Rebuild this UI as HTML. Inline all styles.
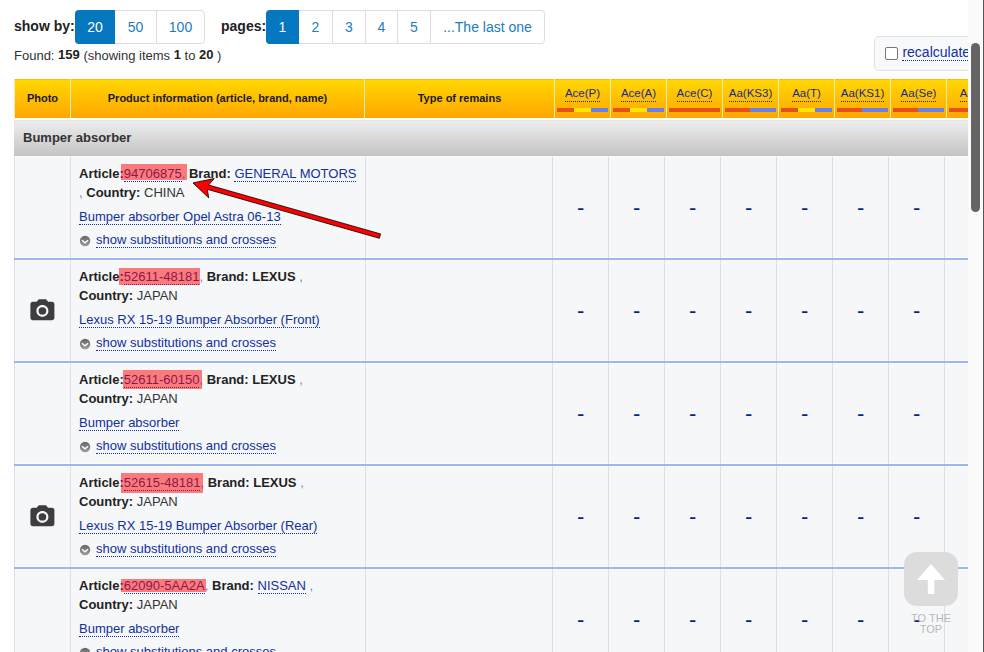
<!DOCTYPE html>
<html lang="en">
<head>
<meta charset="utf-8">
<title>Search results</title>
<style>
*{box-sizing:border-box}
html,body{margin:0;padding:0}
body{width:984px;height:652px;overflow:hidden;background:#fff;font-family:"Liberation Sans",sans-serif;font-size:13px;color:#333;position:relative}
#view{position:absolute;left:0;top:0;width:968px;height:652px;overflow:hidden;background:#fff}
#sb{position:absolute;left:968px;top:0;width:15px;height:652px;background:#fafafa}
#sb i{position:absolute;left:3px;top:43px;width:9px;height:169px;border-radius:5px;background:#646464}
#edge{position:absolute;left:983px;top:0;width:1px;height:652px;background:#555}
.lbl{position:absolute;font-weight:bold;font-size:14px;color:#222;top:16px;line-height:20px;white-space:nowrap}
.pg{position:absolute;top:10px;height:34px;display:flex;border:1px solid #ddd;border-radius:4px;background:#fff}
.pg span{display:block;height:32px;line-height:32px;padding:0;text-align:center;color:#1b7cc0;font-size:14px;border-left:1px solid #ddd;white-space:nowrap}
.pg span.on{background:#0477bf;color:#fff;margin:-1px 0 -1px -1px;height:34px;line-height:34px;border-left:0;border-radius:4px 0 0 4px}
.pg span.on+span{border-left:0}
#found{position:absolute;left:14px;top:47px;line-height:18px;font-size:13px;color:#333;white-space:nowrap}
#found b{color:#222;position:relative;top:-1px}
#recalc{position:absolute;left:874px;top:36px;width:120px;height:34.6px;border:1px solid #e1e1e5;border-radius:5px;background:#f8f9fb}
#recalc i{position:absolute;left:10px;top:10px;width:13px;height:13px;border:1px solid #767676;border-radius:2px;background:#fff}
#recalc a{position:absolute;left:27.4px;top:6.5px;font-size:14px;line-height:16px;color:#10309f;border-bottom:1px dotted #10309f;white-space:nowrap}
#hd{position:absolute;left:14px;top:78.6px;width:1100px;height:39.2px;background:linear-gradient(#ffd800,#ffa600);box-shadow:inset 0 1px 0 #f9bc00}
#hd .h{position:absolute;top:0;height:100%;border-left:1px solid #fce9b0;font-size:11px;font-weight:bold;color:#1a1a1a;text-align:center;line-height:39px;white-space:nowrap}
#hd .c{font-weight:normal;font-size:11.5px;line-height:13px;padding-top:8px}
#hd .c a{color:#1a2a8c;border-bottom:1px dotted #1a2a8c;display:inline-block;line-height:13px;padding-bottom:1px}
.bar{position:absolute;left:2px;width:51px;top:29.4px;height:4px;display:flex}
.bar b{display:block;flex:1;height:4px}
.bar.two .r{flex:none;width:25px}
.r{background:#e8501a}.y{background:#ffe600}.b{background:#6a7fe8}
#grp{position:absolute;left:14px;top:119.5px;width:1100px;height:36.5px;box-shadow:0 1px 0 #f6f7f9;background:linear-gradient(#ededed,#c4c4c4);border-top:1px solid #e4e4e4;font-weight:bold;font-size:13px;color:#333;padding-left:9px;line-height:33px}
.row{position:absolute;left:14px;width:1100px;height:103px;background:#f6f7f9;border-bottom:2px solid #9db5f0;box-shadow:inset 0 1px 0 #fcfcfd,inset 0 -1px 0 #fcfcfd}
.row .v{position:absolute;top:0;bottom:0;width:1px;background:#dedfe3}
.row .d{position:absolute;top:40px;font-size:22px;line-height:22px;color:#0a1f8c}
.ln{position:absolute;left:65px;white-space:nowrap;line-height:19px;font-size:13px;color:#333}
.ln b{color:#222}
.hl{position:absolute;background:rgba(255,0,0,.5);z-index:3}
.art{color:#c2264a;border-bottom:1px dotted #c2264a}
.lk{color:#10309f;border-bottom:1px dotted #10309f}
.cm{color:#7486c6}
.ic{position:absolute;left:65px;top:78px;width:12px;height:12px}
.cam{position:absolute;left:13.7px;top:36.8px;width:28.8px;height:27.8px}
#top{position:absolute;left:904px;top:552px;width:54px;height:54px;border-radius:13px;background:#dcdcdc}
#toptx{position:absolute;left:900px;top:613px;width:62px;text-align:center;font-size:11px;line-height:11px;color:#b9b9b9}
#arrow{position:absolute;left:0;top:0}
</style>
</head>
<body>
<div id="view">
<div class="lbl" style="left:14px">show by:</div>
<div class="pg" style="left:75px"><span class="on" style="width:40px">20</span><span style="width:41px">50</span><span style="width:48px">100</span></div>
<div class="lbl" style="left:221px">pages:</div>
<div class="pg" style="left:266px"><span class="on" style="width:33px">1</span><span style="width:33px">2</span><span style="width:33px">3</span><span style="width:32px">4</span><span style="width:33px">5</span><span style="width:114px">...The last one</span></div>
<div id="found">Found: <b>159</b> (showing items <b>1</b> to <b>20</b> )</div>
<div id="recalc"><i></i><a>recalculate</a></div>
<div id="hd">
<div class="h" style="left:0px;width:56px">Photo</div>
<div class="h" style="left:56px;width:294px">Product information (article, brand, name)</div>
<div class="h" style="left:350px;width:190px">Type of remains</div>
<div class="h c" style="left:540px;width:56px"><a>Ace(P)</a><div class="bar"><b class="r"></b><b class="y"></b><b class="b"></b></div></div>
<div class="h c" style="left:596px;width:56px"><a>Ace(A)</a><div class="bar"><b class="r"></b><b class="y"></b><b class="b"></b></div></div>
<div class="h c" style="left:652px;width:56px"><a>Ace(C)</a><div class="bar"><b class="r"></b></div></div>
<div class="h c" style="left:708px;width:56px"><a>Aa(KS3)</a><div class="bar two"><b class="r"></b><b class="b"></b></div></div>
<div class="h c" style="left:764px;width:56px"><a>Aa(T)</a><div class="bar"><b class="r"></b><b class="y"></b><b class="b"></b></div></div>
<div class="h c" style="left:820px;width:56px"><a>Aa(KS1)</a><div class="bar two"><b class="r"></b><b class="b"></b></div></div>
<div class="h c" style="left:876px;width:56px"><a>Aa(Se)</a><div class="bar two"><b class="r"></b><b class="b"></b></div></div>
<div class="h c" style="left:932px;width:56px"><a>Aa(X)</a><div class="bar two"><b class="r"></b><b class="b"></b></div></div>
<div class="h c" style="left:988px;width:56px"><a>Aa(Y)</a><div class="bar two"><b class="r"></b><b class="b"></b></div></div>
</div>
<div id="grp">Bumper absorber</div>
<div class="row" style="top:157px">
<i class="v" style="left:0px"></i><i class="v" style="left:56px"></i><i class="v" style="left:351px"></i><i class="v" style="left:538px"></i><i class="v" style="left:594px"></i><i class="v" style="left:650px"></i><i class="v" style="left:706px"></i><i class="v" style="left:762px"></i><i class="v" style="left:818px"></i><i class="v" style="left:874px"></i><i class="v" style="left:930px"></i><i class="v" style="left:986px"></i><i class="v" style="left:1042px"></i>
<span class="d" style="left:563px">-</span><span class="d" style="left:619px">-</span><span class="d" style="left:675px">-</span><span class="d" style="left:731px">-</span><span class="d" style="left:787px">-</span><span class="d" style="left:843px">-</span><span class="d" style="left:899px">-</span><span class="d" style="left:955px">-</span>
<div class="hl" style="left:107px;top:7px;width:65.7px;height:16.3px"></div>
<div class="ln" style="top:7px"><b>Article:</b><span class="lk">94706875</span><span class="cm">,</span> <b>Brand:</b> <span class="lk">GENERAL MOTORS</span></div>
<div class="ln" style="top:26px"><span class="cm">,</span> <b>Country:</b> CHINA</div>
<div class="ln" style="top:50px"><span class="lk">Bumper absorber Opel Astra 06-13</span></div>
<svg class="ic" viewBox="0 0 12 12"><circle cx="6.05" cy="6" r="5.2" fill="url(#icg)"/><path d="M2.9 5.2L6 7.8L9.1 5.2" fill="none" stroke="#fff" stroke-width="1.4"/></svg><div class="ln" style="top:73px;left:82px"><span class="lk">show substitutions and crosses</span></div>
</div>
<div class="row" style="top:260px">
<i class="v" style="left:0px"></i><i class="v" style="left:56px"></i><i class="v" style="left:351px"></i><i class="v" style="left:538px"></i><i class="v" style="left:594px"></i><i class="v" style="left:650px"></i><i class="v" style="left:706px"></i><i class="v" style="left:762px"></i><i class="v" style="left:818px"></i><i class="v" style="left:874px"></i><i class="v" style="left:930px"></i><i class="v" style="left:986px"></i><i class="v" style="left:1042px"></i>
<span class="d" style="left:563px">-</span><span class="d" style="left:619px">-</span><span class="d" style="left:675px">-</span><span class="d" style="left:731px">-</span><span class="d" style="left:787px">-</span><span class="d" style="left:843px">-</span><span class="d" style="left:899px">-</span><span class="d" style="left:955px">-</span>
<svg class="cam" viewBox="0 0 24 24" preserveAspectRatio="none"><circle cx="12" cy="12" r="3.2" fill="#3d3d3f"/><path fill="#3d3d3f" d="M9 2L7.17 4H4c-1.1 0-2 .9-2 2v12c0 1.1.9 2 2 2h16c1.1 0 2-.9 2-2V6c0-1.1-.9-2-2-2h-3.17L15 2H9zm3 15c-2.76 0-5-2.24-5-5s2.24-5 5-5 5 2.24 5 5-2.24 5-5 5z"/></svg>
<div class="hl" style="left:105px;top:8px;width:81px;height:17px"></div>
<div class="ln" style="top:7px"><b>Article:</b><span class="lk">52611-48181</span><span class="cm">,</span> <b>Brand:</b> <b>LEXUS</b> <span class="cm">,</span></div>
<div class="ln" style="top:26px"><b>Country:</b> JAPAN</div>
<div class="ln" style="top:50px"><span class="lk">Lexus RX 15-19 Bumper Absorber (Front)</span></div>
<svg class="ic" viewBox="0 0 12 12"><circle cx="6.05" cy="6" r="5.2" fill="url(#icg)"/><path d="M2.9 5.2L6 7.8L9.1 5.2" fill="none" stroke="#fff" stroke-width="1.4"/></svg><div class="ln" style="top:73px;left:82px"><span class="lk">show substitutions and crosses</span></div>
</div>
<div class="row" style="top:363px">
<i class="v" style="left:0px"></i><i class="v" style="left:56px"></i><i class="v" style="left:351px"></i><i class="v" style="left:538px"></i><i class="v" style="left:594px"></i><i class="v" style="left:650px"></i><i class="v" style="left:706px"></i><i class="v" style="left:762px"></i><i class="v" style="left:818px"></i><i class="v" style="left:874px"></i><i class="v" style="left:930px"></i><i class="v" style="left:986px"></i><i class="v" style="left:1042px"></i>
<span class="d" style="left:563px">-</span><span class="d" style="left:619px">-</span><span class="d" style="left:675px">-</span><span class="d" style="left:731px">-</span><span class="d" style="left:787px">-</span><span class="d" style="left:843px">-</span><span class="d" style="left:899px">-</span><span class="d" style="left:955px">-</span>
<div class="hl" style="left:109px;top:7px;width:79px;height:19px"></div>
<div class="ln" style="top:7px"><b>Article:</b><span class="lk">52611-60150</span><span class="cm">,</span> <b>Brand:</b> <b>LEXUS</b> <span class="cm">,</span></div>
<div class="ln" style="top:26px"><b>Country:</b> JAPAN</div>
<div class="ln" style="top:50px"><span class="lk">Bumper absorber</span></div>
<svg class="ic" viewBox="0 0 12 12"><circle cx="6.05" cy="6" r="5.2" fill="url(#icg)"/><path d="M2.9 5.2L6 7.8L9.1 5.2" fill="none" stroke="#fff" stroke-width="1.4"/></svg><div class="ln" style="top:73px;left:82px"><span class="lk">show substitutions and crosses</span></div>
</div>
<div class="row" style="top:466px">
<i class="v" style="left:0px"></i><i class="v" style="left:56px"></i><i class="v" style="left:351px"></i><i class="v" style="left:538px"></i><i class="v" style="left:594px"></i><i class="v" style="left:650px"></i><i class="v" style="left:706px"></i><i class="v" style="left:762px"></i><i class="v" style="left:818px"></i><i class="v" style="left:874px"></i><i class="v" style="left:930px"></i><i class="v" style="left:986px"></i><i class="v" style="left:1042px"></i>
<span class="d" style="left:563px">-</span><span class="d" style="left:619px">-</span><span class="d" style="left:675px">-</span><span class="d" style="left:731px">-</span><span class="d" style="left:787px">-</span><span class="d" style="left:843px">-</span><span class="d" style="left:899px">-</span><span class="d" style="left:955px">-</span>
<svg class="cam" viewBox="0 0 24 24" preserveAspectRatio="none"><circle cx="12" cy="12" r="3.2" fill="#3d3d3f"/><path fill="#3d3d3f" d="M9 2L7.17 4H4c-1.1 0-2 .9-2 2v12c0 1.1.9 2 2 2h16c1.1 0 2-.9 2-2V6c0-1.1-.9-2-2-2h-3.17L15 2H9zm3 15c-2.76 0-5-2.24-5-5s2.24-5 5-5 5 2.24 5 5-2.24 5-5 5z"/></svg>
<div class="hl" style="left:107px;top:7px;width:82px;height:20.4px"></div>
<div class="ln" style="top:7px"><b>Article:</b><span class="lk">52615-48181</span><span class="cm">,</span> <b>Brand:</b> <b>LEXUS</b> <span class="cm">,</span></div>
<div class="ln" style="top:26px"><b>Country:</b> JAPAN</div>
<div class="ln" style="top:50px"><span class="lk">Lexus RX 15-19 Bumper Absorber (Rear)</span></div>
<svg class="ic" viewBox="0 0 12 12"><circle cx="6.05" cy="6" r="5.2" fill="url(#icg)"/><path d="M2.9 5.2L6 7.8L9.1 5.2" fill="none" stroke="#fff" stroke-width="1.4"/></svg><div class="ln" style="top:73px;left:82px"><span class="lk">show substitutions and crosses</span></div>
</div>
<div class="row" style="top:569px">
<i class="v" style="left:0px"></i><i class="v" style="left:56px"></i><i class="v" style="left:351px"></i><i class="v" style="left:538px"></i><i class="v" style="left:594px"></i><i class="v" style="left:650px"></i><i class="v" style="left:706px"></i><i class="v" style="left:762px"></i><i class="v" style="left:818px"></i><i class="v" style="left:874px"></i><i class="v" style="left:930px"></i><i class="v" style="left:986px"></i><i class="v" style="left:1042px"></i>
<span class="d" style="left:563px">-</span><span class="d" style="left:619px">-</span><span class="d" style="left:675px">-</span><span class="d" style="left:731px">-</span><span class="d" style="left:787px">-</span><span class="d" style="left:843px">-</span><span class="d" style="left:899px">-</span><span class="d" style="left:955px">-</span>
<div class="hl" style="left:107px;top:10px;width:85px;height:12.5px"></div>
<div class="ln" style="top:7px"><b>Article:</b><span class="lk">62090-5AA2A</span><span class="cm">,</span> <b>Brand:</b> <span class="lk">NISSAN</span> <span class="cm">,</span></div>
<div class="ln" style="top:26px"><b>Country:</b> JAPAN</div>
<div class="ln" style="top:50px"><span class="lk">Bumper absorber</span></div>
<svg class="ic" viewBox="0 0 12 12"><circle cx="6.05" cy="6" r="5.2" fill="url(#icg)"/><path d="M2.9 5.2L6 7.8L9.1 5.2" fill="none" stroke="#fff" stroke-width="1.4"/></svg><div class="ln" style="top:73px;left:82px"><span class="lk">show substitutions and crosses</span></div>
</div>
<svg id="arrow" width="968" height="652" viewBox="0 0 968 652"><defs><linearGradient id="icg" x1="0" y1="0" x2="0" y2="1"><stop offset="0" stop-color="#666"/><stop offset="1" stop-color="#9c9c9c"/></linearGradient></defs><g transform="translate(191.8 182.6) rotate(15.87)"><path d="M1.2 0L20.4 -10L16.8 -2.25L195.6 -2.25L195.6 2.25L16.8 2.25L20.4 10Z" fill="#ff0000" stroke="#000" stroke-width=".75" stroke-linejoin="miter"/></g></svg>
<div id="top"><svg width="54" height="54" viewBox="0 0 54 54"><path d="M27 12L41 28H30.3V42H23.8V28H13Z" fill="#fff"/></svg></div>
<div id="toptx">TO THE<br>TOP</div>
</div>
<div id="sb"><i></i></div>
<div id="edge"></div>
</body>
</html>
